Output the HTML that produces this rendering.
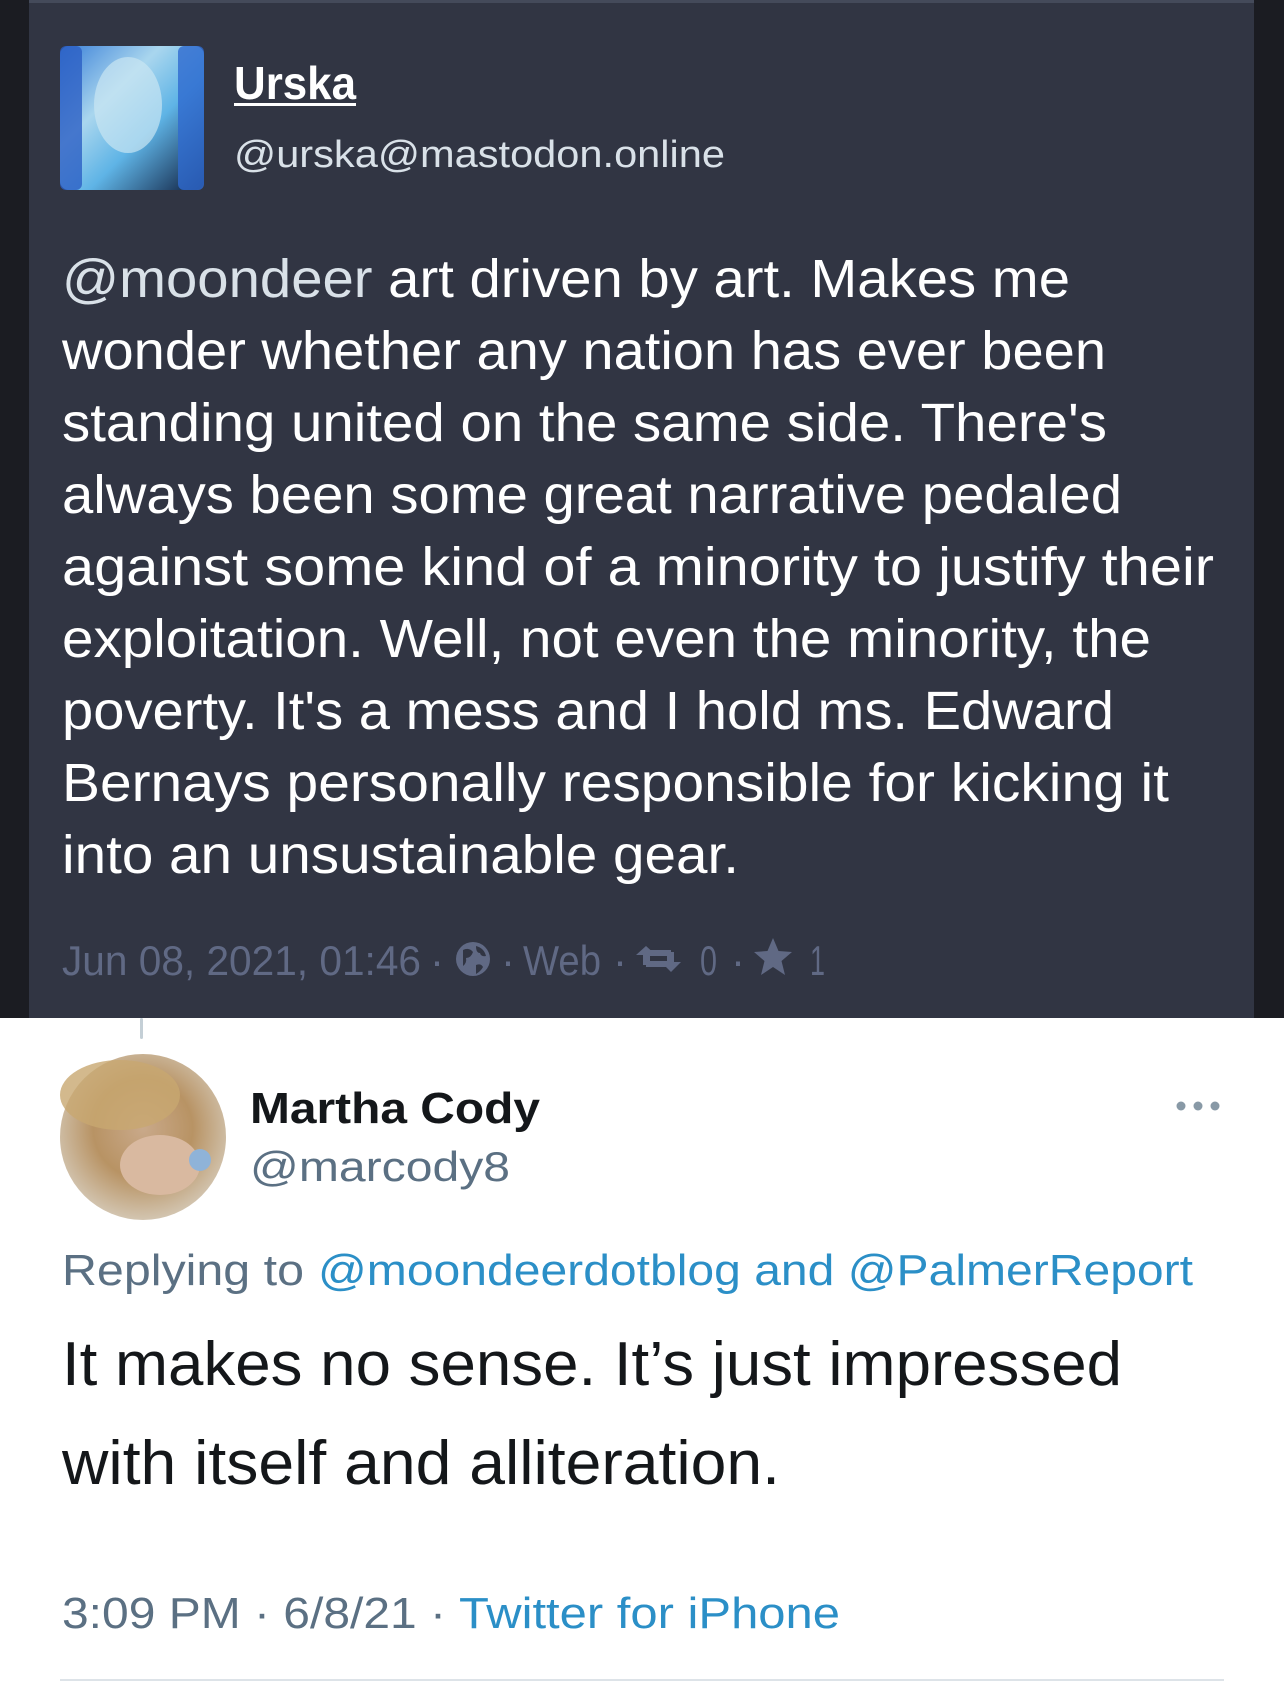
<!DOCTYPE html>
<html><head><meta charset="utf-8"><style>
html,body{margin:0;padding:0;background:#fff;}
svg{display:block;}
text{font-family:"Liberation Sans",sans-serif;}
</style></head><body>
<svg width="1284" height="1684" viewBox="0 0 1284 1684" xmlns="http://www.w3.org/2000/svg">
<defs>
<linearGradient id="ua" x1="0" y1="0" x2="1" y2="1">
<stop offset="0" stop-color="#3a7fd8"/><stop offset="0.35" stop-color="#a9d6ee"/><stop offset="0.6" stop-color="#5fb4e6"/><stop offset="1" stop-color="#0d1a3a"/>
</linearGradient>
<radialGradient id="ma" cx="0.5" cy="0.45" r="0.6">
<stop offset="0" stop-color="#c9a98a"/><stop offset="0.5" stop-color="#b89364"/><stop offset="1" stop-color="#d8cfc0"/>
</radialGradient>
</defs>
<rect x="0" y="0" width="1284" height="1018" fill="#1b1c22"/>
<rect x="29" y="2" width="1225" height="1016" fill="#313543"/>
<rect x="29" y="0" width="1225" height="3" fill="#444a5a"/>
<rect x="60" y="46" width="144" height="144" rx="9" fill="url(#ua)"/>
<ellipse cx="128" cy="105" rx="34" ry="48" fill="#c9e6f2" opacity="0.7"/>
<rect x="60" y="46" width="22" height="144" rx="6" fill="#2c5fc4" opacity="0.8"/>
<rect x="178" y="46" width="26" height="144" rx="6" fill="#2f6ad0" opacity="0.8"/>
<text x="234" y="99" font-size="46" font-weight="bold" fill="#fff" textLength="122" lengthAdjust="spacingAndGlyphs">Urska</text>
<rect x="234" y="103" width="122" height="3" fill="#fff"/>
<text x="234" y="167" font-size="38" fill="#d9e1e8" textLength="491" lengthAdjust="spacingAndGlyphs">@urska@mastodon.online</text>
<g font-size="54" fill="#fff">
<text x="62" y="297" textLength="1008" lengthAdjust="spacingAndGlyphs"><tspan fill="#d9e1e8">@moondeer</tspan> art driven by art. Makes me</text>
<text x="62" y="369" textLength="1044" lengthAdjust="spacingAndGlyphs">wonder whether any nation has ever been</text>
<text x="62" y="441" textLength="1045" lengthAdjust="spacingAndGlyphs">standing united on the same side. There's</text>
<text x="62" y="513" textLength="1060" lengthAdjust="spacingAndGlyphs">always been some great narrative pedaled</text>
<text x="62" y="585" textLength="1152" lengthAdjust="spacingAndGlyphs">against some kind of a minority to justify their</text>
<text x="62" y="657" textLength="1089" lengthAdjust="spacingAndGlyphs">exploitation. Well, not even the minority, the</text>
<text x="62" y="729" textLength="1052" lengthAdjust="spacingAndGlyphs">poverty. It's a mess and I hold ms. Edward</text>
<text x="62" y="801" textLength="1107" lengthAdjust="spacingAndGlyphs">Bernays personally responsible for kicking it</text>
<text x="62" y="873" textLength="677" lengthAdjust="spacingAndGlyphs">into an unsustainable gear.</text>
</g>
<g font-size="42" fill="#606984">
<text x="62" y="975" textLength="359" lengthAdjust="spacingAndGlyphs">Jun 08, 2021, 01:46</text>
<text x="430" y="975">·</text>
<circle cx="473" cy="959" r="17" fill="#606984"/>
<path d="M463 950 q6 -3 10 2 q-2 6 -7 6 q1 5 -3 8 z M476 946 q8 2 10 10 q-5 1 -6 -3 q-4 0 -4 -7z M476 965 q5 -2 7 2 q-2 4 -7 7z" fill="#313543"/>
<text x="501" y="975">·</text>
<text x="523" y="975" textLength="78" lengthAdjust="spacingAndGlyphs">Web</text>
<text x="613" y="975">·</text>
<path d="M636 955 l10 -9 l10 9 h-6 v6 h17 v-9 h7 v15 h-28 v-12z M681 962 l-10 10 l-10 -10 h6 v-6 h-17 v9 h-7 v-15 h28 v12z" fill="#606984"/>
<text x="700" y="975" textLength="17" lengthAdjust="spacingAndGlyphs">0</text>
<text x="731" y="975">·</text>
<path d="M773 938 l5.5 13 l13.5 1 l-10.5 9 l3.5 14 l-12 -8 l-12 8 l3.5 -14 l-10.5 -9 l13.5 -1z" fill="#606984"/>
<text x="810" y="975" textLength="15" lengthAdjust="spacingAndGlyphs">1</text>
</g>
<rect x="140" y="1018" width="3" height="21" rx="1.5" fill="#c4cfd6"/>
<circle cx="143" cy="1137" r="83" fill="url(#ma)"/>
<ellipse cx="120" cy="1095" rx="60" ry="35" fill="#c8a870" opacity="0.8"/>
<ellipse cx="160" cy="1165" rx="40" ry="30" fill="#d9b9a0"/>
<circle cx="200" cy="1160" r="11" fill="#8fb3d8"/>
<text x="250" y="1123" font-size="44" font-weight="bold" fill="#14171a" textLength="290" lengthAdjust="spacingAndGlyphs">Martha Cody</text>
<text x="250" y="1181" font-size="42" fill="#5b7083" textLength="260" lengthAdjust="spacingAndGlyphs">@marcody8</text>
<circle cx="1181" cy="1106" r="4.5" fill="#8899a6"/>
<circle cx="1198" cy="1106" r="4.5" fill="#8899a6"/>
<circle cx="1215" cy="1106" r="4.5" fill="#8899a6"/>
<text x="62" y="1285" font-size="44" fill="#5b7083" textLength="242" lengthAdjust="spacingAndGlyphs">Replying to</text>
<text x="318" y="1285" font-size="44" fill="#2b8fc7" textLength="875" lengthAdjust="spacingAndGlyphs">@moondeerdotblog and @PalmerReport</text>
<text x="62" y="1385" font-size="62" fill="#14171a" textLength="1060" lengthAdjust="spacingAndGlyphs">It makes no sense. It’s just impressed</text>
<text x="62" y="1484" font-size="62" fill="#14171a" textLength="718" lengthAdjust="spacingAndGlyphs">with itself and alliteration.</text>
<text x="62" y="1628" font-size="44" fill="#5b7083" textLength="384" lengthAdjust="spacingAndGlyphs">3:09 PM · 6/8/21 ·</text>
<text x="459" y="1628" font-size="44" fill="#2b8fc7" textLength="381" lengthAdjust="spacingAndGlyphs">Twitter for iPhone</text>
<rect x="60" y="1679" width="1164" height="2" fill="#dde3e8"/>
</svg>
</body></html>
